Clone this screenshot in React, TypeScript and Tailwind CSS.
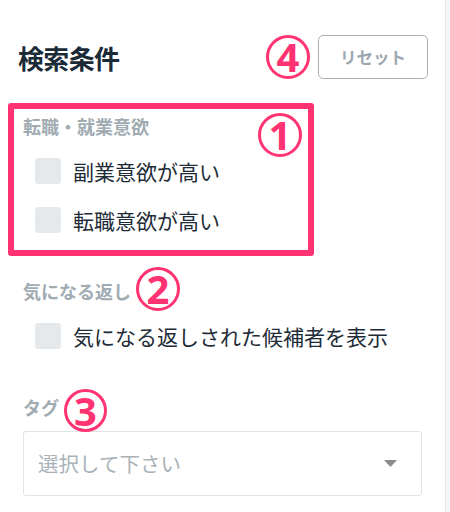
const jp = "font-['Noto_Sans_CJK_JP','Noto_Sans',sans-serif]"

const Marker = ({ n, className }: { n: string; className: string }) => (
  <div
    className={`absolute flex items-center justify-center rounded-full border-[3px] border-[#ff3371] text-[#ff3371] ${className}`}
  >
    <span className="font-['Noto_Sans',sans-serif] text-[40px] font-bold leading-none">{n}</span>
  </div>
)

const CheckRow = ({ label }: { label: string }) => (
  <label className="flex items-center gap-3 pl-3">
    <span className="h-[26px] w-[26px] shrink-0 rounded-[3px] bg-[#e5e9ec]" />
    <span className="text-[21px] leading-[26px] text-[#1e2c38]">{label}</span>
  </label>
)

export default function App() {
  return (
    <div className={`flex h-[512px] w-[450px] overflow-hidden bg-[#f5f6f7] ${jp}`}>
      <div className="relative w-[446px] shrink-0 border-r border-[#e6e9eb] bg-white">
        <header className="flex items-center justify-between pl-[18px] pr-[17px] pt-[35px]">
          <h1 className="text-[26px] font-bold tracking-tight text-[#1a2a36]">検索条件</h1>
          <button className="h-[44px] w-[110px] rounded-[5px] border border-[#a5b0b7] text-[16.5px] font-bold text-[#9ea8af]">
            リセット
          </button>
        </header>

        <div className="flex flex-col gap-[46px] px-[23px] pt-[35px]">
          <section className="flex flex-col gap-5">
            <h2 className="text-[18px] font-bold leading-6 text-[#a1abb2]">転職・就業意欲</h2>
            <div className="flex flex-col gap-[23px]">
              <CheckRow label="副業意欲が高い" />
              <CheckRow label="転職意欲が高い" />
            </div>
          </section>

          <section className="flex flex-col gap-5">
            <h2 className="text-[18px] font-bold leading-6 text-[#a1abb2]">気になる返し</h2>
            <CheckRow label="気になる返しされた候補者を表示" />
          </section>

          <section className="flex flex-col gap-3">
            <h2 className="text-[18px] font-bold leading-6 text-[#a1abb2]">タグ</h2>
            <div className="flex h-[65px] w-[399px] items-center justify-between rounded-[3px] border border-[#e1e4e6] pl-[14px] pr-[24px]">
              <span className="text-[20.5px] text-[#a9b2b8]">選択して下さい</span>
              <svg width="13" height="7" viewBox="0 0 13 7">
                <polygon points="0,0 13,0 6.5,7" fill="#8c8c8c" />
              </svg>
            </div>
          </section>
        </div>

        <div className="pointer-events-none absolute left-[8px] top-[103px] h-[153px] w-[306px] rounded-[3px] border-[6px] border-[#ff3371]" />
        <Marker n="4" className="left-[266px] top-[35px] h-[44px] w-[44px]" />
        <Marker n="1" className="left-[258px] top-[113px] h-[44px] w-[44px]" />
        <Marker n="2" className="left-[136px] top-[267px] h-[44px] w-[44px]" />
        <Marker n="3" className="left-[64px] top-[389px] h-[43px] w-[43px]" />
      </div>
    </div>
  )
}
